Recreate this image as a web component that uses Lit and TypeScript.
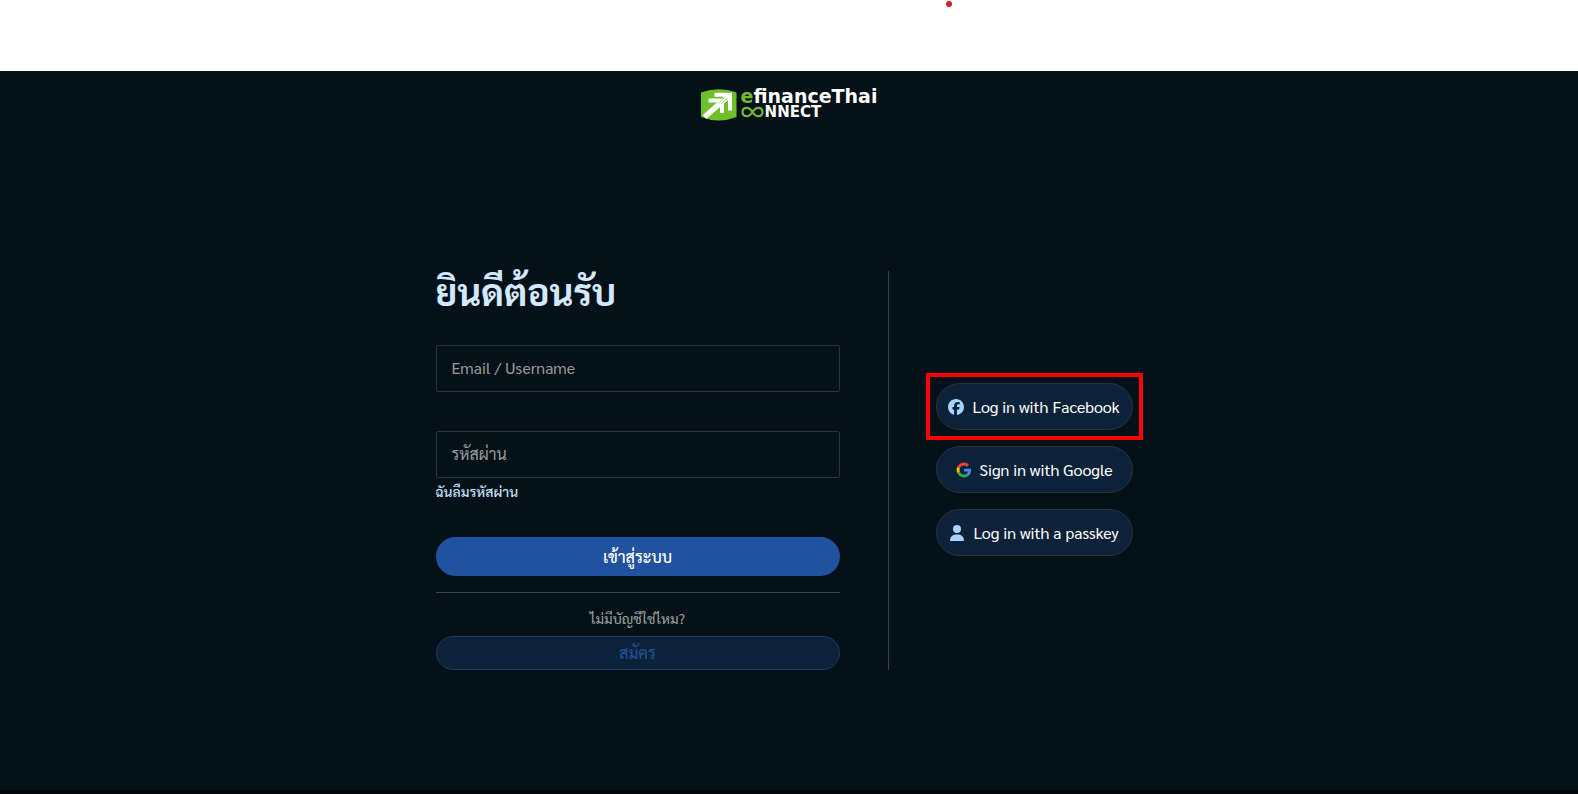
import { LitElement, html, css } from "lit";
import { customElement } from "lit/decorators.js";

@customElement("brand-logo")
export class BrandLogo extends LitElement {
  static styles = css`
    :host {
      display: flex;
      gap: 4px;
      font-family: "DejaVu Sans", sans-serif;
      font-weight: 700;
      color: #fff;
    }
    .mark {
      width: 36px;
      height: 32px;
    }
    .words {
      display: flex;
      flex-direction: column;
    }
    .name {
      font-size: 19px;
      line-height: 15px;
    }
    .accent {
      color: #76b82a;
    }
    .sub {
      display: flex;
      align-items: center;
      font-size: 15px;
      line-height: 16px;
    }
    .loop {
      width: 24px;
      height: 12px;
    }
  `;

  render() {
    return html`
      <svg class="mark" viewBox="0 0 36 32" aria-hidden="true">
        <path d="M0 3.500Q18-3 35.500 3.500V28Q18 35 0 28Z" fill="#6fbe2c" />
        <g fill="none" stroke="#fff">
          <path d="M13.500 5.700H29V21.500" stroke-width="4" />
          <path d="M7.500 11.500H21V24" stroke-width="4" />
          <path d="M3.500 28L28 6.700" stroke-width="5.500" />
        </g>
        <path d="M19 9.200L23.500 9L17 14.500M25.500 11V9.500L20 15" fill="none" stroke="#6fbe2c" stroke-width=".6" />
      </svg>
      <div class="words">
        <span class="name"><span class="accent">e</span>financeThai</span>
        <span class="sub">
          <svg class="loop" viewBox="0 0 24 12" aria-hidden="true">
            <path
              d="M11.500 6C9.500 3 8.500 1.800 6 1.800C3.300 1.800 1.500 3.500 1.500 6S3.300 10.200 6 10.200C8.500 10.200 9.500 9 11.500 6S14.500 1.800 17 1.800C19.700 1.800 21.500 3.500 21.500 6S19.700 10.200 17 10.200C14.500 10.200 13.500 9 11.500 6Z"
              fill="none"
              stroke="#76b82a"
              stroke-width="2.200"
            />
          </svg>
          <span>NNECT</span>
        </span>
      </div>
    `;
  }
}

@customElement("app-root")
export class AppRoot extends LitElement {
  static styles = css`
    * {
      box-sizing: border-box;
    }
    :host {
      display: flex;
      flex-direction: column;
      min-height: 100vh;
      background: #041118;
      border-bottom: 4px solid #01070b;
      box-sizing: border-box;
      font-family: Sarabun, "Noto Sans Thai Looped", "Noto Sans", "Noto Sans Thai", sans-serif;
      font-size: 16px;
      line-height: 24px;
      color: #fff;
    }
    .top {
      height: 71px;
      background: #fff;
      display: flex;
      justify-content: center;
      padding: 1px 0 0 319px;
    }
    .dot {
      width: 6px;
      height: 6px;
      border-radius: 50%;
      background: #d2201f;
    }
    .brand {
      display: flex;
      justify-content: center;
      padding-top: 18px;
    }
    .main {
      display: flex;
      justify-content: center;
      padding-top: 150px;
    }
    .form {
      width: 404px;
      display: flex;
      flex-direction: column;
      margin: 0;
    }
    .title {
      margin: 0 0 34px;
      font-size: 37px;
      line-height: 40px;
      font-weight: 700;
      color: #d3e9ff;
    }
    .field {
      height: 47px;
      width: 100%;
      padding: 0 15px 2px;
      border: 1px solid #2b3439;
      border-radius: 2px;
      background: transparent;
      font: inherit;
      color: #fff;
    }
    .field::placeholder {
      color: #9a9a9a;
      opacity: 1;
    }
    .password {
      margin-top: 39px;
    }
    .forgot {
      align-self: flex-start;
      margin-top: 3px;
      font-size: 14px;
      line-height: 20px;
      font-weight: 500;
      color: #c4e1fb;
      text-decoration: none;
    }
    .submit,
    .register {
      border-radius: 24px;
      font: inherit;
      padding: 0;
    }
    .submit {
      margin-top: 36px;
      height: 39px;
      border: 0;
      background: #21529f;
      color: #fff;
      font-weight: 500;
    }
    .rule {
      width: 100%;
      margin: 16px 0 15px;
      border: 0;
      border-top: 1px solid #3b4042;
    }
    .ask {
      margin: 0 0 8px;
      font-size: 14px;
      line-height: 20px;
      text-align: center;
      color: #a3a3a3;
    }
    .register {
      height: 34px;
      border: 1px solid #1b3a66;
      background: #0c2239;
      color: #21529f;
    }
    .social {
      margin-left: 48px;
      padding: 0 10px 2px 47px;
      border-left: 1px solid #3b4042;
      display: flex;
      flex-direction: column;
      justify-content: center;
      gap: 16px;
    }
    .slot {
      position: relative;
      display: flex;
    }
    .marked::after {
      content: "";
      position: absolute;
      inset: -10px;
      border: 4px solid #f00;
      pointer-events: none;
    }
    .provider {
      width: 197px;
      height: 47px;
      display: flex;
      align-items: center;
      justify-content: center;
      gap: 8px;
      padding: 0;
      border: 1px solid #28333e;
      border-radius: 24px;
      background: #0c2239;
      color: #fff;
      font: inherit;
      white-space: nowrap;
    }
    .icon {
      width: 16px;
      height: 16px;
      flex: none;
    }
  `;

  render() {
    return html`
      <div class="top"><span class="dot"></span></div>
      <header class="brand"><brand-logo></brand-logo></header>
      <main class="main">
        <form class="form" @submit=${(e: Event) => e.preventDefault()}>
          <h1 class="title">ยินดีต้อนรับ</h1>
          <input class="field" type="text" aria-label="Email / Username" placeholder="Email / Username" />
          <input class="field password" type="password" aria-label="รหัสผ่าน" placeholder="รหัสผ่าน" />
          <a class="forgot" href="#forgot">ฉันลืมรหัสผ่าน</a>
          <button class="submit" type="submit">เข้าสู่ระบบ</button>
          <hr class="rule" />
          <p class="ask">ไม่มีบัญชีใช่ไหม?</p>
          <button class="register" type="button">สมัคร</button>
        </form>
        <div class="social">
          <div class="slot marked">
            <button class="provider" type="button">
              <svg class="icon" viewBox="0 0 512 512" aria-hidden="true">
                <path
                  fill="#a8d3ff"
                  d="M512 256C512 114.600 397.400 0 256 0S0 114.600 0 256C0 376 82.700 476.800 194.200 504.500V334.200H141.400V256h52.800V222.300c0-87.100 39.400-127.500 125-127.500c16.200 0 44.200 3.200 55.700 6.400V172c-6-.6-16.500-1-29.600-1c-42 0-58.200 15.900-58.200 57.200V256h83.600l-14.400 78.200H287V510.100C413.800 494.800 512 386.900 512 256Z"
                />
              </svg>
              Log in with Facebook
            </button>
          </div>
          <div class="slot">
            <button class="provider" type="button">
              <svg class="icon" viewBox="-2 -2 52 52" aria-hidden="true">
                <path fill="#EA4335" d="M24 9.500c3.540 0 6.710 1.220 9.210 3.600l6.850-6.850C35.900 2.380 30.470 0 24 0 14.620 0 6.510 5.380 2.560 13.220l7.980 6.190C12.430 13.720 17.740 9.500 24 9.500z" />
                <path fill="#4285F4" d="M46.980 24.550c0-1.570-.15-3.090-.38-4.550H24v9.020h12.940c-.58 2.960-2.260 5.480-4.780 7.180l7.730 6c4.510-4.180 7.090-10.360 7.090-17.650z" />
                <path fill="#FBBC05" d="M10.530 28.590c-.48-1.450-.76-2.990-.76-4.590s.27-3.140.76-4.590l-7.980-6.190C.92 16.460 0 20.120 0 24c0 3.880.92 7.540 2.560 10.780l7.970-6.190z" />
                <path fill="#34A853" d="M24 48c6.480 0 11.930-2.130 15.890-5.810l-7.730-6c-2.150 1.450-4.920 2.300-8.160 2.300-6.260 0-11.570-4.220-13.470-9.910l-7.980 6.190C6.510 42.620 14.620 48 24 48z" />
              </svg>
              Sign in with Google
            </button>
          </div>
          <div class="slot">
            <button class="provider" type="button">
              <svg class="icon" viewBox="0 0 16 16" aria-hidden="true">
                <circle cx="8" cy="4" r="4" fill="#a8d3ff" />
                <path d="M1 16C1 11 4 9.500 8 9.500S15 11 15 16Z" fill="#a8d3ff" />
              </svg>
              Log in with a passkey
            </button>
          </div>
        </div>
      </main>
    `;
  }
}
